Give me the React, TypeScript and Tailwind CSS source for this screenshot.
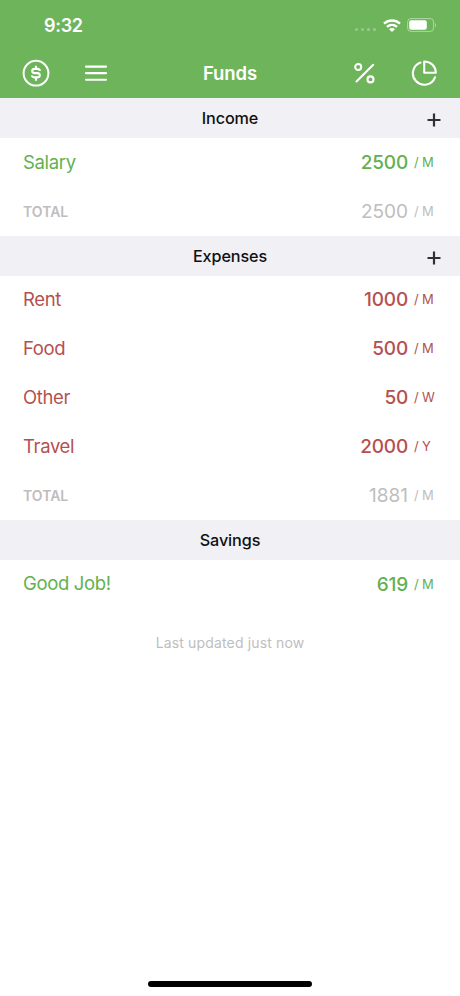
type Fund = {
  name: string;
  amount: number;
  period: 'M' | 'W' | 'Y';
};

type Tone = 'green' | 'red' | 'muted';

const INCOME: Fund[] = [{ name: 'Salary', amount: 2500, period: 'M' }];

const EXPENSES: Fund[] = [
  { name: 'Rent', amount: 1000, period: 'M' },
  { name: 'Food', amount: 500, period: 'M' },
  { name: 'Other', amount: 50, period: 'W' },
  { name: 'Travel', amount: 2000, period: 'Y' },
];

const TONES: Record<Tone, string> = {
  green: 'text-[#62b150]',
  red: 'text-[#b5504f]',
  muted: 'text-[#bebebe]',
};

function StatusBar() {
  return (
    <div className="flex h-12 items-center justify-between pt-[3px] pl-11 pr-[23px] text-white">
      <span className="text-[18px] font-semibold leading-none tracking-[-0.3px]">9:32</span>
      <div className="flex items-center">
        <div className="mt-2 mr-[7px] flex gap-[2.4px]">
          {[0, 1, 2, 3].map(dot => (
            <span key={dot} className="h-[3.5px] w-[3.5px] rounded-full bg-white/30" />
          ))}
        </div>
        <svg className="-mt-px" width="18" height="13" viewBox="0 0 18 13" fill="none" stroke="currentColor" strokeWidth="2.4">
          <path d="M1 4.6C5.5 .4 12.5 .4 17 4.6" />
          <path d="M4 7.9C6.9 5.3 11.1 5.3 14 7.9" />
          <path d="M6 10.2C7.7 8.7 10.3 8.7 12 10.2L9 13Z" fill="currentColor" stroke="none" />
        </svg>
        <svg className="-mt-px ml-[6px]" width="30" height="14" viewBox="0 0 30 14" fill="none">
          <rect x=".6" y=".6" width="26" height="12.8" rx="3.4" stroke="white" strokeOpacity=".45" />
          <rect x="2.2" y="2.2" width="17.6" height="9.6" rx="2" fill="white" />
          <path d="M28 5v4.2c1.3-.6 1.3-3.6 0-4.2Z" fill="white" fillOpacity=".5" />
        </svg>
      </div>
    </div>
  );
}

function NavBar() {
  return (
    <div className="grid h-[50px] grid-cols-3 items-center px-[22px] text-white">
      <div className="flex items-center gap-[35px]">
        <svg width="28" height="28" viewBox="0 0 28 28" fill="none" stroke="currentColor" strokeWidth="2">
          <circle cx="14" cy="14.2" r="12.4" />
          <path d="M18 11.9C17.7 10.5 16.8 9.9 15.3 9.9H12.7C9.4 9.9 9.4 14.1 12.7 14.1H15.2C18.6 14.1 18.6 18.4 15.2 18.4H12.7C11.1 18.4 10.1 17.8 9.8 16.4M14 6.7V9.9M14 18.4V21.8" strokeWidth="2.1" />
        </svg>
        <svg width="22" height="18" viewBox="0 0 22 18" stroke="currentColor" strokeWidth="2.1" strokeLinecap="round">
          <path d="M1 2.6H21M1 9.1H21M1 15.7H21" />
        </svg>
      </div>
      <h1 className="pt-px text-center text-[18.5px] font-semibold tracking-[-0.1px]">Funds</h1>
      <div className="flex items-center justify-end gap-[36px] pr-px">
        <svg width="22" height="22" viewBox="0 0 22 22" fill="none" stroke="currentColor" strokeWidth="2.1">
          <path d="M3.5 19.5L20.2 2.8" strokeLinecap="round" />
          <circle cx="5.2" cy="5" r="3" />
          <circle cx="17.5" cy="17.4" r="3" />
        </svg>
        <svg width="26" height="26" viewBox="0 0 26 26" fill="none" stroke="currentColor" strokeWidth="2.1" strokeLinejoin="round" strokeLinecap="round">
          <path d="M9.5 2.6A11.4 11.4 0 1 0 24 17.3" />
          <path d="M13.2 1.5V12.8H24.8C24.8 6.3 19.9 1.5 13.2 1.5Z" />
        </svg>
      </div>
    </div>
  );
}

function SectionHeader({ title, canAdd }: { title: string; canAdd?: boolean }) {
  return (
    <div className="grid h-10 grid-cols-[1fr_auto_1fr] items-center bg-[#f1f0f5] px-[19px]">
      <span />
      <h2 className="text-[16.2px] font-medium tracking-[-0.1px] text-[#101012]">{title}</h2>
      {canAdd && (
        <button aria-label={`Add ${title}`} className="mt-1 justify-self-end text-[#303035]">
          <svg className="block" width="14" height="14" viewBox="0 0 14 14" stroke="currentColor" strokeWidth="2.2">
            <path d="M7 .5V13.5M.5 7H13.5" />
          </svg>
        </button>
      )}
    </div>
  );
}

function FundRow({ fund, tone }: { fund: Fund; tone: Tone }) {
  const isTotal = tone === 'muted';

  return (
    <div className={`flex h-[48.85px] items-center pl-[23px] pr-5 ${TONES[tone]}`}>
      <span className={isTotal ? 'text-[14px] font-semibold' : 'text-[18.5px] tracking-[-0.35px]'}>
        {fund.name}
      </span>
      <span className={`ml-auto pt-px text-[19px] ${isTotal ? 'font-normal' : 'font-medium tracking-[-0.2px]'}`}>
        {fund.amount}
      </span>
      <span className="ml-[6px] w-[8px] text-[13px]">/</span>
      <span className="w-[18px] text-[13px]">{fund.period}</span>
    </div>
  );
}

export default function App() {
  return (
    <div className="flex h-[996px] w-[460px] flex-col overflow-hidden bg-white font-['Inter',sans-serif]">
      <header className="bg-[#6eb45a]">
        <StatusBar />
        <NavBar />
      </header>

      <main className="flex-1">
        <SectionHeader title="Income" canAdd />
        {INCOME.map(fund => (
          <FundRow key={fund.name} fund={fund} tone="green" />
        ))}
        <FundRow fund={{ name: 'TOTAL', amount: 2500, period: 'M' }} tone="muted" />

        <SectionHeader title="Expenses" canAdd />
        {EXPENSES.map(fund => (
          <FundRow key={fund.name} fund={fund} tone="red" />
        ))}
        <FundRow fund={{ name: 'TOTAL', amount: 1881, period: 'M' }} tone="muted" />

        <SectionHeader title="Savings" />
        <FundRow fund={{ name: 'Good Job!', amount: 619, period: 'M' }} tone="green" />

        <p className="mt-6 text-center text-[14px] leading-5 tracking-[0.15px] text-[#bebebe]">Last updated just now</p>
      </main>

      <div className="mx-auto mb-[9px] h-[6px] w-[164px] rounded-full bg-black" />
    </div>
  );
}
